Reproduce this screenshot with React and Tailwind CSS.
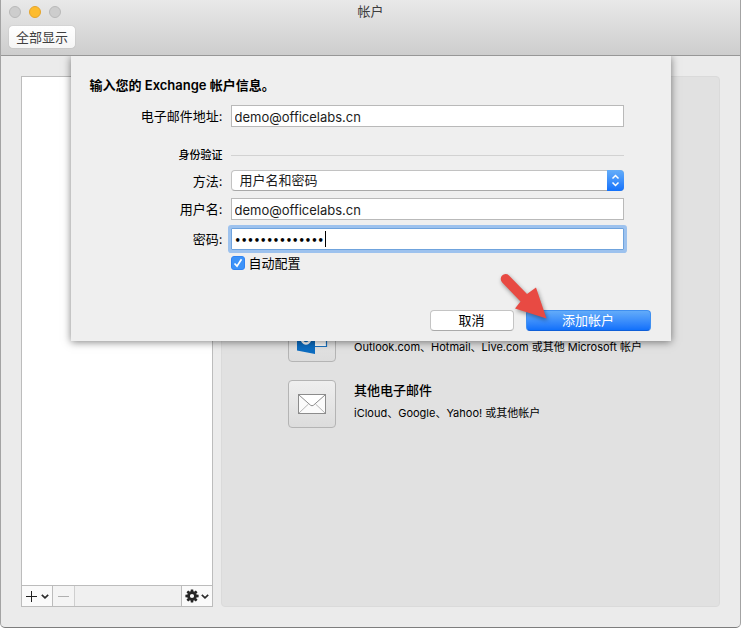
import { useState } from 'react';

const inputClass = 'h-[22px] w-full border border-[#b9b9b9] bg-white px-[3px] pt-px text-[13px] text-[#1c1c1c] outline-none';
const labelClass = 'text-right text-[13px] leading-5';

function OutlookIcon() {
  return (
    <svg width="32" height="32" viewBox="0 0 32 32" aria-hidden="true">
      <path d="M17 7h13.5v17.5H17z" fill="#fff" stroke="#1a72bf" strokeWidth="1.2" />
      <path d="M17 11l7 6 6.5-6" fill="none" stroke="#1a72bf" strokeWidth="1.2" />
      <path d="M1 4.5L19 1v31L1 28.5z" fill="#0c6cc0" />
      <ellipse cx="10" cy="16.5" rx="4.2" ry="5" fill="none" stroke="#fff" strokeWidth="2.6" />
    </svg>
  );
}

function MailIcon() {
  return (
    <svg width="30" height="22" viewBox="0 0 30 22" aria-hidden="true">
      <rect x="1.5" y="1.5" width="27" height="19" fill="#fbfbfb" stroke="#8c8c8c" />
      <path d="M2 20l9.5-9M28 20l-9.5-9" fill="none" stroke="#b5b5b5" />
      <path d="M2 2l11.5 10.2q1.5 1.2 3 0L28 2" fill="#fff" stroke="#8c8c8c" />
    </svg>
  );
}

function Chevron() {
  return (
    <svg width="8" height="5" viewBox="0 0 8 5" aria-hidden="true">
      <path d="M.8 .8L4 3.8 7.2 .8" fill="none" stroke="#2b2b2b" strokeWidth="1.7" />
    </svg>
  );
}

function GearIcon() {
  return (
    <svg width="14" height="14" viewBox="-7 -7 14 14" aria-hidden="true">
      <g fill="#262626">
        {[0, 45, 90, 135, 180, 225, 270, 315].map((a) => (
          <path key={a} d="M-1.5-4L-1.2-6.6H1.2L1.5-4z" transform={`rotate(${a})`} />
        ))}
      </g>
      <circle r="3.4" fill="none" stroke="#262626" strokeWidth="2.6" />
    </svg>
  );
}

function AccountOption({ label, icon, children }) {
  return (
    <div className="flex items-center gap-[18px]">
      <button
        aria-label={label}
        className="flex size-12 shrink-0 items-center justify-center rounded-[4px] border border-[#b4b4b4] bg-linear-to-b from-[#efefef] to-[#dcdcdc]"
      >
        {icon}
      </button>
      {children}
    </div>
  );
}

function Toolbar() {
  return (
    <header className="relative z-20 h-14 border-b border-[#979797] bg-linear-to-b from-[#e9e9e9] to-[#cdcdcd]">
      <div className="grid h-6 grid-cols-3 items-center px-2">
        <div className="flex gap-2">
          <button aria-label="关闭" className="size-3 rounded-full border border-[#b9b9b9] bg-[#cdcdcd]" />
          <button aria-label="最小化" className="size-3 rounded-full border border-[#e5a42b] bg-[#fdbc2f]" />
          <button aria-label="缩放" className="size-3 rounded-full border border-[#b9b9b9] bg-[#cdcdcd]" />
        </div>
        <h1 className="text-center text-[13px] text-[#3d3d3d]">帐户</h1>
      </div>
      <button className="ml-2 mt-0.5 block h-[22px] rounded-[4px] bg-linear-to-b from-white to-[#f5f5f5] px-[7px] text-[13px] leading-5 text-[#3f3f3f] shadow-[0_0_1px_rgba(0,0,0,0.35)]">
        全部显示
      </button>
    </header>
  );
}

function AccountList() {
  return (
    <aside className="flex w-48 shrink-0 flex-col border border-[#bcbcbc] bg-white">
      <div className="flex-1" />
      <div className="flex h-[21px] border-t border-[#bcbcbc] bg-[#f0f0f0]">
        <button aria-label="添加" className="flex w-[31px] items-center justify-center gap-1 border-r border-[#bcbcbc] bg-[#fafafa]">
          <svg width="11" height="11" viewBox="0 0 11 11" aria-hidden="true">
            <path d="M0 5.5h11M5.5 0v11" stroke="#1f1f1f" />
          </svg>
          <Chevron />
        </button>
        <button aria-label="删除" className="flex w-[22px] items-center justify-center border-r border-[#cfcfcf] bg-[#f4f4f4]">
          <span className="h-px w-[11px] bg-[#b0b0b0]" />
        </button>
        <button aria-label="设置" className="ml-auto flex w-[31px] items-center justify-center gap-0.5 border-l border-[#bcbcbc] bg-[#fafafa]">
          <GearIcon />
          <Chevron />
        </button>
      </div>
    </aside>
  );
}

function ExchangeSheet() {
  const [email, setEmail] = useState('demo@officelabs.cn');
  const [username, setUsername] = useState('demo@officelabs.cn');
  const [password, setPassword] = useState('abcdefghijklmn');
  const [auto, setAuto] = useState(true);

  return (
    <form
      onSubmit={(e) => e.preventDefault()}
      className="absolute left-1/2 top-14 z-10 w-[600px] max-w-full -translate-x-1/2 bg-[#efefef] pb-[10px] pt-[19px] shadow-[0_1px_8px_rgba(0,0,0,0.5)]"
    >
      <h2 className="pl-[19px] text-[13px] font-semibold leading-5">输入您的 Exchange 帐户信息。</h2>

      <div className="grid grid-cols-[152px_1fr] items-center gap-x-2 pr-[47px] pt-[10px]">
        <label htmlFor="email" className={labelClass}>电子邮件地址:</label>
        <input id="email" className={inputClass} value={email} onChange={(e) => setEmail(e.target.value)} />

        <span className="pb-1 pt-5 text-right text-[11px] font-medium leading-4">身份验证</span>
        <hr className="mt-4 border-[#d2d2d2]" />

        <label htmlFor="method" className={labelClass}>方法:</label>
        <div className="relative my-[3px]">
          <select
            id="method"
            className="block h-[21px] w-full appearance-none rounded-[4px] border border-[#c2c2c2] border-b-[#a8a8a8] bg-white pl-2 text-[13px] leading-[19px] text-[#1c1c1c] outline-none"
          >
            <option>用户名和密码</option>
          </select>
          <span className="pointer-events-none absolute inset-y-0 right-0 flex w-[17px] items-center justify-center rounded-r-[4px] bg-linear-to-b from-[#64adf9] to-[#1271fb]">
            <svg width="9" height="13" viewBox="0 0 9 13" aria-hidden="true">
              <path d="M1.5 4.5l3-3 3 3M1.5 8.5l3 3 3-3" fill="none" stroke="#fff" strokeWidth="1.5" />
            </svg>
          </span>
        </div>

        <label htmlFor="username" className={labelClass}>用户名:</label>
        <input id="username" className={`${inputClass} my-1`} value={username} onChange={(e) => setUsername(e.target.value)} />

        <label htmlFor="password" className={labelClass}>密码:</label>
        <div className="relative my-1">
          <input
            id="password"
            type="password"
            className="block h-[22px] w-full rounded-[1px] border border-[#6fa3dd] bg-white px-[3px] pt-0.5 font-['DejaVu_Sans',sans-serif] text-[10px] font-bold text-black caret-transparent outline-none ring-3 ring-[#9dc2ee]"
            value={password}
            onChange={(e) => setPassword(e.target.value)}
          />
          <span className="absolute inset-y-[3px] left-[94px] w-px bg-black" />
        </div>

        <div className="col-start-2 flex items-center gap-1 text-[13px] leading-[18px]">
          <span className="relative block size-[14px]">
            <input
              id="auto"
              type="checkbox"
              checked={auto}
              onChange={(e) => setAuto(e.target.checked)}
              className="block size-[14px] appearance-none rounded-[3px] border border-[#b9b9b9] bg-white checked:border-[#2f83f3] checked:bg-[#3d93f8]"
            />
            {auto && (
              <svg className="pointer-events-none absolute inset-0" width="14" height="14" viewBox="0 0 14 14" aria-hidden="true">
                <path d="M3.5 7.5l2.5 2.7 4.5-7" fill="none" stroke="#fff" strokeWidth="1.7" />
              </svg>
            )}
          </span>
          <label htmlFor="auto">自动配置</label>
        </div>
      </div>

      <div className="flex justify-end gap-3 pr-5 pt-[38px]">
        <button type="button" className="h-[21px] w-[84px] rounded-[4px] border border-[#c4c4c4] border-b-[#aaaaaa] bg-white text-[13px] leading-[19px]">
          取消
        </button>
        <div className="relative">
          <button
            type="submit"
            className="block h-[21px] w-[125px] rounded-[4px] border border-[#3f8ff0] border-b-[#0f5fd8] bg-linear-to-b from-[#62abf9] to-[#1070fb] text-[13px] leading-[19px] text-white"
          >
            添加帐户
          </button>
          {/* pointer arrow over the button */}
          <svg
            className="pointer-events-none absolute -left-7 -top-10 drop-shadow-[1px_2px_2px_rgba(0,0,0,0.4)]"
            width="50"
            height="52"
            viewBox="0 0 50 52"
            aria-hidden="true"
          >
            <path d="M11 5.4L29 24 38 17.5 48.5 48.5 17 38.5 22.5 31.5 4.2 12.4A4.8 4.8 0 0 1 11 5.4z" fill="#e84a43" />
          </svg>
        </div>
      </div>
    </form>
  );
}

export default function App() {
  return (
    <div className="relative flex min-h-screen flex-col overflow-hidden rounded-b-[5px] border-x border-b border-x-[#a3a3a3] border-b-[#7d7d7d] bg-[#ebebeb] font-['Inter','Noto_Sans_CJK_SC',sans-serif] text-black">
      <Toolbar />
      <main className="flex flex-1 gap-2 px-5 pb-5 pt-5">
        <AccountList />
        <section className="flex flex-1 flex-col gap-[18px] rounded-[4px] border border-[#dadada] bg-[#e1e1e1] pl-[66px] pt-[237px]">
          <AccountOption label="Outlook.com" icon={<OutlookIcon />}>
            <p className="self-end pb-[7px] text-[11px] leading-4">Outlook.com、Hotmail、Live.com 或其他 Microsoft 帐户</p>
          </AccountOption>
          <AccountOption label="其他电子邮件" icon={<MailIcon />}>
            <div className="pb-[7px]">
              <h3 className="text-[13px] font-medium leading-5">其他电子邮件</h3>
              <p className="pt-[5px] text-[11px] leading-4">iCloud、Google、Yahoo! 或其他帐户</p>
            </div>
          </AccountOption>
        </section>
      </main>
      <ExchangeSheet />
    </div>
  );
}
